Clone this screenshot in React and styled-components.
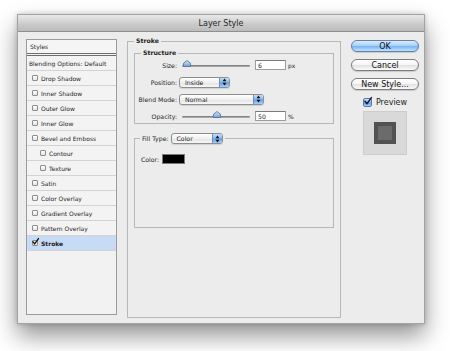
import React from "react";
import styled, { createGlobalStyle } from "styled-components";

const Global = createGlobalStyle`
  html, body { margin: 0; padding: 0; background: #fff; }
  body { font-family: "DejaVu Sans", "Liberation Sans", sans-serif; color: #1e1e1e; }
  #root { width: 450px; height: 351px; overflow: hidden; }
`;

const Page = styled.div`
  padding: 14px 0 0 17px;
`;

const Window = styled.div`
  width: 408px;
  height: 310px;
  box-sizing: border-box;
  border: 1px solid #a3a3a3;
  background: #ececec;
  box-shadow: 0 12px 22px rgba(0, 0, 0, 0.42), 0 0 5px rgba(0, 0, 0, 0.2);
  display: flex;
  flex-direction: column;
`;

const TitleBar = styled.div`
  height: 16px;
  flex: none;
  border-bottom: 1px solid #8f8f8f;
  background: linear-gradient(#e9e9e9, #c9c9c9 60%, #bcbcbc);
  display: flex;
  align-items: center;
  justify-content: center;
  font-size: 8px;
  color: #262626;
`;

const Body = styled.div`
  flex: 1;
  display: flex;
  align-items: flex-start;
  padding: 7px 5px 0 8px;
`;

/* ---------- left styles list ---------- */
const StyleList = styled.div`
  width: 91px;
  height: 276px;
  flex: none;
  box-sizing: border-box;
  border: 1px solid #9b9b9b;
  background: #f2f2f2;
  display: flex;
  flex-direction: column;
`;

const ListHeader = styled.div`
  height: 13px;
  padding-left: 3px;
  display: flex;
  align-items: center;
  border-bottom: 3px double #6d6d6d;
  font-size: 6px;
  background: #f5f5f5;
`;

const ListRow = styled.div`
  height: 15px;
  box-sizing: border-box;
  border-bottom: 1px solid #d3d3d3;
  display: flex;
  align-items: center;
  gap: 3px;
  padding-left: ${(p) => p.$indent}px;
  font-size: 6px;
  font-weight: ${(p) => (p.$bold ? "bold" : "normal")};
  background: ${(p) => (p.$selected ? "#c7dbf6" : "#f3f3f3")};
`;

const SmallCheck = styled.span`
  width: 6px;
  height: 6px;
  flex: none;
  box-sizing: border-box;
  border: 1px solid #8c8c8c;
  border-radius: 1px;
  background: linear-gradient(#ffffff, #e4e4e4);
  position: relative;
  svg {
    position: absolute;
    left: -1px;
    top: -3px;
    overflow: visible;
  }
`;

/* ---------- middle group boxes ---------- */
const Middle = styled.div`
  width: 214px;
  flex: none;
  margin-left: 10px;
  margin-top: -2px;
`;

const Group = styled.fieldset`
  margin: ${(p) => p.$margin || "0"};
  min-width: 0;
  box-sizing: border-box;
  border: 1px solid #b7b7b7;
  padding: ${(p) => p.$pad};
  height: ${(p) => (p.$h ? `${p.$h}px` : "auto")};
`;

const Legend = styled.legend`
  padding: 0 2px;
  margin-left: ${(p) => p.$ml || 0}px;
  font-size: 6.2px;
  line-height: 8px;
  font-weight: ${(p) => (p.$bold ? "bold" : "normal")};
  display: flex;
  align-items: center;
`;

const Rows = styled.div`
  display: flex;
  flex-direction: column;
  gap: 5px;
`;

const FormRow = styled.div`
  display: flex;
  align-items: center;
  height: 12px;
`;

const FieldLabel = styled.span`
  width: 42px;
  flex: none;
  text-align: right;
  font-size: 6.2px;
`;

const Slider = styled.div`
  width: 68px;
  height: 12px;
  margin-left: 5px;
  position: relative;
  flex: none;
`;

const Track = styled.div`
  position: absolute;
  left: 0;
  right: 0;
  top: 6px;
  height: 2px;
  border-radius: 1px;
  background: linear-gradient(#6f6f6f, #b9b9b9);
`;

const Thumb = styled.svg`
  position: absolute;
  top: 1px;
  left: ${(p) => p.$pos}px;
`;

const NumInput = styled.div`
  width: 31px;
  height: 10px;
  margin-left: 5px;
  box-sizing: border-box;
  border: 1px solid #9d9d9d;
  border-top-color: #7a7a7a;
  background: #fff;
  font-size: 6.2px;
  padding-left: 2px;
  display: flex;
  align-items: center;
  flex: none;
`;

const Unit = styled.span`
  margin-left: 2px;
  font-size: 6px;
`;

const Popup = styled.div`
  width: ${(p) => p.$w}px;
  height: 11px;
  margin-left: ${(p) => p.$ml ?? 2}px;
  box-sizing: border-box;
  border: 1px solid #8e8e8e;
  border-radius: 3px;
  background: linear-gradient(#ffffff, #f0f0f0 50%, #e2e2e2 51%, #f7f7f7);
  box-shadow: 0 1px 1px rgba(0, 0, 0, 0.12);
  display: flex;
  overflow: hidden;
  font-size: 6.2px;
  font-weight: normal;
  flex: none;
`;

const PopupText = styled.span`
  flex: 1;
  padding-left: 5px;
  display: flex;
  align-items: center;
`;

const PopupArrows = styled.span`
  width: 9px;
  border-left: 1px solid #6d8fbd;
  background: linear-gradient(#c4dcf7, #8cb9ef 48%, #5d9ae8 52%, #a6d0f8);
  display: flex;
  align-items: center;
  justify-content: center;
`;

const ColorRow = styled.div`
  display: flex;
  align-items: center;
  padding-left: 6px;
  font-size: 6.2px;
  gap: 3px;
`;

const Swatch = styled.div`
  width: 23px;
  height: 10px;
  box-sizing: border-box;
  border: 1px solid #7a7a7a;
  background: #000;
`;

/* ---------- right column ---------- */
const Side = styled.div`
  width: 68px;
  flex: none;
  margin-left: 10px;
  margin-top: 1px;
  display: flex;
  flex-direction: column;
  align-items: center;
`;

const AquaButton = styled.div`
  width: 68px;
  height: 12px;
  box-sizing: border-box;
  margin-bottom: 7px;
  border: 1px solid ${(p) => (p.$default ? "#5f7fae" : "#7d7d7d")};
  border-radius: 7px;
  background: ${(p) =>
    p.$default
      ? "linear-gradient(#dcecfc, #a9d0f6 45%, #7bb7f1 55%, #bfe3fd)"
      : "linear-gradient(#ffffff, #f5f5f5 45%, #e3e3e3 55%, #fafafa)"};
  box-shadow: 0 1px 1px rgba(0, 0, 0, 0.15);
  display: flex;
  align-items: center;
  justify-content: center;
  font-size: 8px;
  color: #111;
`;

const PreviewRow = styled.label`
  height: 10px;
  display: flex;
  align-items: center;
  gap: 4px;
  font-size: 8px;
`;

const BlueCheck = styled.span`
  width: 9px;
  height: 9px;
  box-sizing: border-box;
  border: 1px solid #5579ad;
  border-radius: 2px;
  background: linear-gradient(#cfe4fb, #86b8ef 50%, #5c9be6 51%, #a9d3fa);
  position: relative;
  svg {
    position: absolute;
    left: 0;
    top: -2px;
    overflow: visible;
  }
`;

const PreviewBox = styled.div`
  width: 44px;
  height: 44px;
  margin-top: 4px;
  box-sizing: border-box;
  border: 1px solid #cdcdcd;
  background: #d9d9d9;
  display: flex;
  align-items: center;
  justify-content: center;
`;

const PreviewSquare = styled.div`
  width: 22px;
  height: 22px;
  box-sizing: border-box;
  border: 4px solid #525252;
  background: #6b6b6b;
`;

const items = [
  { label: "Drop Shadow" },
  { label: "Inner Shadow" },
  { label: "Outer Glow" },
  { label: "Inner Glow" },
  { label: "Bevel and Emboss" },
  { label: "Contour", indent: true },
  { label: "Texture", indent: true },
  { label: "Satin" },
  { label: "Color Overlay" },
  { label: "Gradient Overlay" },
  { label: "Pattern Overlay" },
  { label: "Stroke", checked: true, selected: true },
];

const Tick = ({ w = 7, h = 7, color = "#111" }) => (
  <svg width={w} height={h} viewBox="0 0 8 8">
    <path d="M1 4.2 L3 6.8 L7.4 0.6" fill="none" stroke={color} strokeWidth="1.5" strokeLinecap="round" strokeLinejoin="round" />
  </svg>
);

const Arrows = () => (
  <svg width="5" height="8" viewBox="0 0 5 8">
    <path d="M2.5 0.6 L4.4 3.2 H0.6 Z" fill="#111" />
    <path d="M2.5 7.4 L4.4 4.8 H0.6 Z" fill="#111" />
  </svg>
);

const ThumbShape = ({ pos }) => (
  <Thumb $pos={pos} width="8" height="7" viewBox="0 0 8 7">
    <defs>
      <linearGradient id={`tg${pos}`} x1="0" y1="0" x2="0" y2="1">
        <stop offset="0" stopColor="#d9e9fa" />
        <stop offset="1" stopColor="#6f9fd8" />
      </linearGradient>
    </defs>
    <path d="M4 0.5 L7.5 3.2 V6.5 H0.5 V3.2 Z" fill={`url(#tg${pos})`} stroke="#4f6f9c" strokeWidth="0.8" />
  </Thumb>
);

const Dropdown = ({ value, w, ml }) => (
  <Popup $w={w} $ml={ml}>
    <PopupText>{value}</PopupText>
    <PopupArrows>
      <Arrows />
    </PopupArrows>
  </Popup>
);

export default function App() {
  return (
    <>
      <Global />
      <Page>
        <Window>
          <TitleBar>Layer Style</TitleBar>
          <Body>
            <StyleList>
              <ListHeader>Styles</ListHeader>
              <ListRow $indent={2}>Blending Options: Default</ListRow>
              {items.map((it) => (
                <ListRow
                  key={it.label}
                  $indent={it.indent ? 13 : 5}
                  $selected={it.selected}
                  $bold={it.checked}
                >
                  <SmallCheck>{it.checked && <Tick w={7} h={7} />}</SmallCheck>
                  {it.label}
                </ListRow>
              ))}
            </StyleList>

            <Middle>
              <Group $pad="4px 6px 0 6px" $h={281}>
                <Legend $bold>Stroke</Legend>
                <Group $pad="2px 0 1px 0">
                  <Legend $bold $ml={6}>Structure</Legend>
                  <Rows>
                    <FormRow>
                      <FieldLabel>Size:</FieldLabel>
                      <Slider>
                        <Track />
                        <ThumbShape pos={1} />
                      </Slider>
                      <NumInput>6</NumInput>
                      <Unit>px</Unit>
                    </FormRow>
                    <FormRow>
                      <FieldLabel>Position:</FieldLabel>
                      <Dropdown value="Inside" w={51} />
                    </FormRow>
                    <FormRow>
                      <FieldLabel>Blend Mode:</FieldLabel>
                      <Dropdown value="Normal" w={85} />
                    </FormRow>
                    <FormRow>
                      <FieldLabel>Opacity:</FieldLabel>
                      <Slider>
                        <Track />
                        <ThumbShape pos={31} />
                      </Slider>
                      <NumInput>50</NumInput>
                      <Unit>%</Unit>
                    </FormRow>
                  </Rows>
                </Group>
                <Group $pad="10px 0 0 0" $h={95} $margin="9px 0 0 0">
                  <Legend $ml={5}>
                    Fill Type:
                    <Dropdown value="Color" w={52} ml={2} />
                  </Legend>
                  <ColorRow>
                    Color:
                    <Swatch />
                  </ColorRow>
                </Group>
              </Group>
            </Middle>

            <Side>
              <AquaButton $default>OK</AquaButton>
              <AquaButton>Cancel</AquaButton>
              <AquaButton>New Style...</AquaButton>
              <PreviewRow>
                <BlueCheck>
                  <Tick w={8} h={8} color="#1a1a3a" />
                </BlueCheck>
                Preview
              </PreviewRow>
              <PreviewBox>
                <PreviewSquare />
              </PreviewBox>
            </Side>
          </Body>
        </Window>
      </Page>
    </>
  );
}
